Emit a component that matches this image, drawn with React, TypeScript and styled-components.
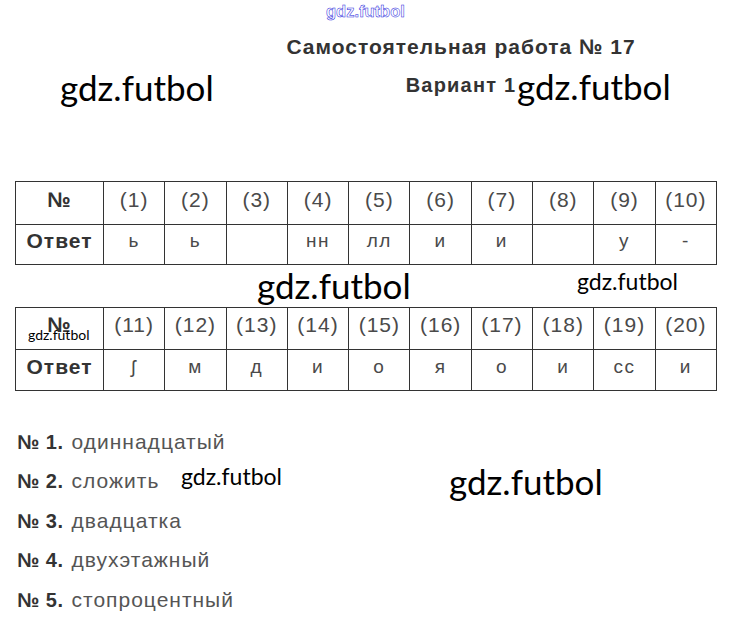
import React from "react";
import styled, { createGlobalStyle } from "styled-components";

const GlobalStyle = createGlobalStyle`
  html, body {
    margin: 0;
    padding: 0;
    background: #ffffff;
  }
  body {
    font-family: "Liberation Sans", Arial, sans-serif;
    color: #444;
  }
`;

const Page = styled.div`
  position: relative;
  width: 731px;
  height: 626px;
  overflow: hidden;
  padding: 0 15px;
  box-sizing: border-box;
  display: flex;
  flex-direction: column;
`;

const Header = styled.header`
  margin-left: 191px;
  padding-top: 35px;
  display: flex;
  flex-direction: column;
  align-items: center;
  gap: 15px;
  color: #333;
  font-weight: 700;
`;

const Title = styled.div`
  font-size: 21px;
  line-height: 24px;
  letter-spacing: 1px;
`;

const Variant = styled.div`
  font-size: 20px;
  line-height: 22px;
  letter-spacing: 1.2px;
`;

const Tables = styled.section`
  margin-top: 85px;
  display: flex;
  flex-direction: column;
  gap: 42px;
`;

const Table = styled.table`
  width: 702px;
  table-layout: fixed;
  border-collapse: collapse;

  col.first {
    width: 88px;
  }

  td {
    border: 1px solid #333;
    padding: 0 0 7px;
    text-align: center;
    vertical-align: middle;
  }
`;

const Row = styled.tr<{ $h: number }>`
  height: ${(p) => p.$h}px;
`;

const HeadCell = styled.td`
  font-size: 21px;
  font-weight: 700;
  letter-spacing: 1px;
  color: #333;
`;

const NumCell = styled.td`
  font-size: 21px;
  letter-spacing: 1px;
  color: #4a4a4a;
`;

const AnswerCell = styled.td`
  font-size: 19px;
  letter-spacing: 1.5px;
  color: #4a4a4a;
`;

const List = styled.ol`
  list-style: none;
  margin: 31px 0 0 2px;
  padding: 0;
  display: flex;
  flex-direction: column;
`;

const Item = styled.li`
  display: flex;
  align-items: center;
  gap: 8px;
  height: 39.5px;
  line-height: 24px;
`;

const Label = styled.b`
  font-size: 20px;
  letter-spacing: 0.5px;
  color: #333;
`;

const Word = styled.span`
  font-size: 21px;
  letter-spacing: 1px;
  color: #555;
`;

const Watermark = styled.div<{ $x: number; $y: number; $size: number }>`
  position: absolute;
  left: ${(p) => p.$x}px;
  top: ${(p) => p.$y}px;
  font-family: Lato, "Open Sans", sans-serif;
  font-size: ${(p) => p.$size}px;
  line-height: 1;
  color: #000;
  white-space: nowrap;
`;

const OutlineMark = styled.div`
  position: absolute;
  left: 326px;
  top: 3px;
  font-family: "Liberation Sans", Arial, sans-serif;
  font-size: 16.5px;
  font-weight: 700;
  line-height: 1;
  color: #fff;
  -webkit-text-stroke: 0.5px #2424dc;
`;

const first = {
  nums: ["(1)", "(2)", "(3)", "(4)", "(5)", "(6)", "(7)", "(8)", "(9)", "(10)"],
  answers: ["ь", "ь", "", "нн", "лл", "и", "и", "", "у", "-"],
};

const second = {
  nums: ["(11)", "(12)", "(13)", "(14)", "(15)", "(16)", "(17)", "(18)", "(19)", "(20)"],
  answers: ["ʃ", "м", "д", "и", "о", "я", "о", "и", "сс", "и"],
};

const items = [
  "одиннадцатый",
  "сложить",
  "двадцатка",
  "двухэтажный",
  "стопроцентный",
];

const marks = [
  { x: 60, y: 70, size: 35 },
  { x: 517, y: 69, size: 35 },
  { x: 257, y: 268, size: 35 },
  { x: 449, y: 464, size: 35 },
  { x: 577, y: 270, size: 23 },
  { x: 181, y: 465, size: 23 },
  { x: 28, y: 328, size: 14 },
];

const AnswerTable = ({
  nums,
  answers,
  heights,
}: {
  nums: string[];
  answers: string[];
  heights: [number, number];
}) => (
  <Table>
    <colgroup>
      <col className="first" />
      {nums.map((n) => (
        <col key={n} />
      ))}
    </colgroup>
    <tbody>
      <Row $h={heights[0]}>
        <HeadCell>№</HeadCell>
        {nums.map((n) => (
          <NumCell key={n}>{n}</NumCell>
        ))}
      </Row>
      <Row $h={heights[1]}>
        <HeadCell>Ответ</HeadCell>
        {answers.map((a, i) => (
          <AnswerCell key={i}>{a}</AnswerCell>
        ))}
      </Row>
    </tbody>
  </Table>
);

export default function App() {
  return (
    <>
      <GlobalStyle />
      <Page>
        <OutlineMark>gdz.futbol</OutlineMark>
        <Header>
          <Title>Самостоятельная работа № 17</Title>
          <Variant>Вариант 1</Variant>
        </Header>

        <Tables>
          <AnswerTable {...first} heights={[43, 40]} />
          <AnswerTable {...second} heights={[42, 41]} />
        </Tables>

        <List>
          {items.map((word, i) => (
            <Item key={word}>
              <Label>№ {i + 1}.</Label>
              <Word>{word}</Word>
            </Item>
          ))}
        </List>

        {marks.map((m, i) => (
          <Watermark key={i} $x={m.x} $y={m.y} $size={m.size}>
            gdz.futbol
          </Watermark>
        ))}
      </Page>
    </>
  );
}
